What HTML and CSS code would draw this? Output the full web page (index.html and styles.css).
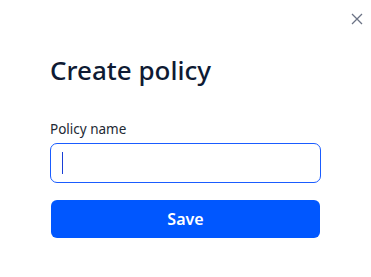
FILE: index.html
```html
<!DOCTYPE html>
<html>
<head>
<meta charset="utf-8">
<link rel="stylesheet" href="styles.css">
</head>
<body>
<div class="modal">
  <button class="close" aria-label="Close">
    <svg width="12" height="12" viewBox="0 0 12 12"><path d="M1 1L11 11M11 1L1 11" stroke="#6b7385" stroke-width="1.3" fill="none"/></svg>
  </button>
  <h1 class="title">Create policy</h1>
  <label class="label">Policy name</label>
  <div class="input"><span class="caret"></span></div>
  <button class="save">Save</button>
</div>
</body>
</html>
```
FILE: styles.css
```css
html, body {
  margin: 0;
  padding: 0;
  background: #fff;
}
.modal {
  position: relative;
  width: 371px;
  height: 277px;
  box-sizing: border-box;
  padding: 53px 50px 0 50px;
  font-family: "Noto Sans", sans-serif;
  display: flex;
  flex-direction: column;
}
.close {
  position: absolute;
  top: 13px;
  right: 8px;
  background: none;
  border: 0;
  padding: 0;
  width: 12px;
  height: 12px;
  display: flex;
}
.title {
  margin: 0;
  font-size: 26px;
  font-weight: 500;
  color: #0e1a33;
  line-height: 34px;
}
.label {
  margin-top: 33px;
  font-size: 13.5px;
  color: #222833;
  line-height: 18px;
}
.input {
  margin-top: 5px;
  height: 40px;
  box-sizing: border-box;
  border: 1px solid #1a5cff;
  border-radius: 7px;
  display: flex;
  align-items: center;
  padding-left: 11px;
}
.caret {
  width: 1px;
  height: 22px;
  background: #1a3fd6;
}
.save {
  margin: 17px 1px 0 1px;
  height: 38px;
  border: 0;
  border-radius: 6px;
  background: #0057ff;
  color: #fff;
  font-family: "Noto Sans", sans-serif;
  font-weight: 600;
  font-size: 16px;
}
```
